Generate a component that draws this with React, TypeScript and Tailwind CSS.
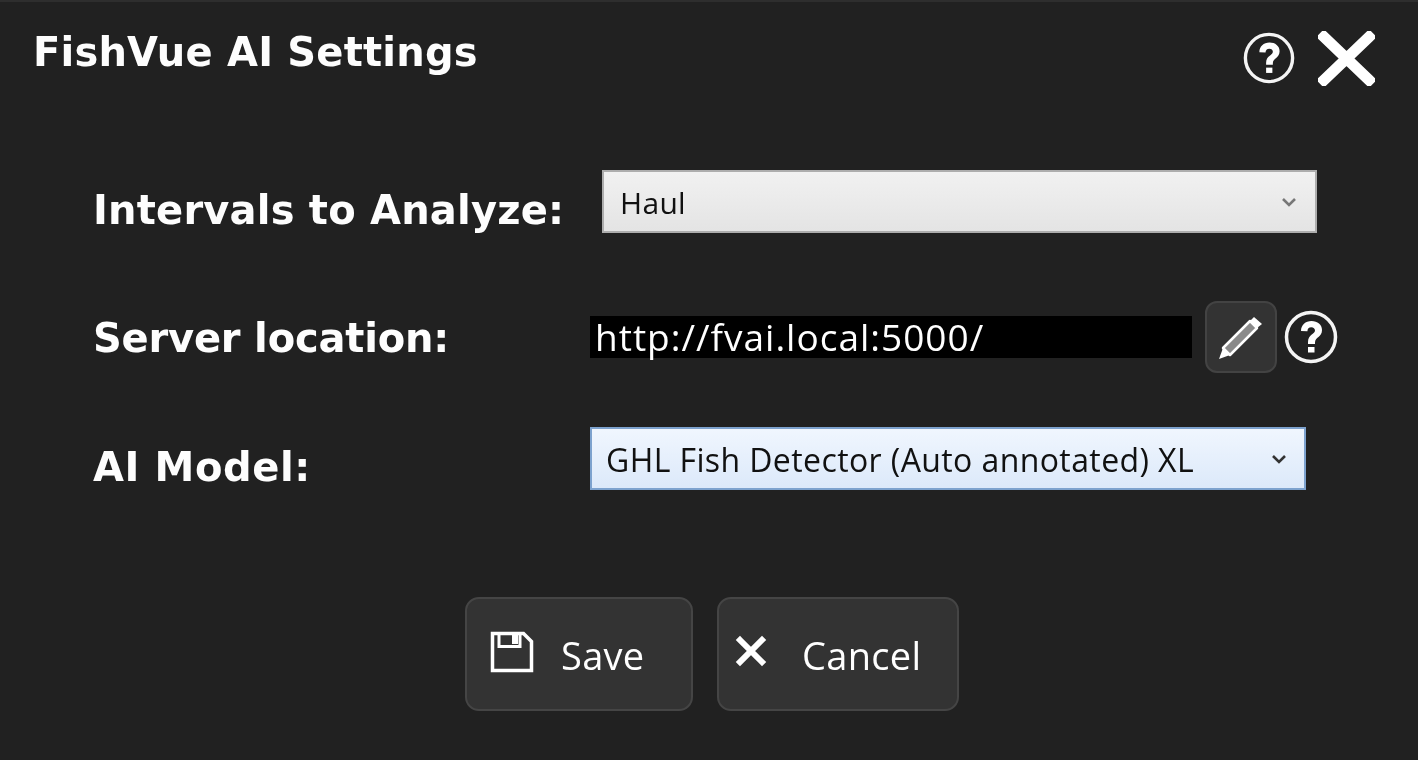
import React from 'react';

const labelFont = "font-['DejaVu_Sans',sans-serif] font-bold text-[#fdfdfd] text-[40px]";
const bodyFont = "font-['Open_Sans',sans-serif]";

const HelpIcon = () => (
  <svg viewBox="0 0 54 54" className="w-[54px] h-[54px]">
    <circle cx="27" cy="27" r="24.5" fill="none" stroke="#f4f4f4" strokeWidth="3.5" />
    <path d="M17 21c0-6 4.500-10 10.500-10 6 0 10.500 3.600 10.500 9 0 7.300-7 7-7 12.500v1.500h-7v-2c0-7.500 7-7.700 7-11.500 0-1.900-1.500-3.200-3.700-3.200-2.500 0-3.800 1.600-3.900 4z" fill="#fff" />
    <rect x="24" y="37" width="6.500" height="5.500" fill="#fff" />
  </svg>
);

const Chevron = ({ color }: { color: string }) => (
  <svg viewBox="0 0 16 10" className="w-4 h-2.5">
    <path d="M2 2l6 6 6-6" fill="none" stroke={color} strokeWidth="2.600" />
  </svg>
);

const SaveIcon = () => (
  <svg viewBox="0 0 44 44" className="w-11 h-11 -ml-[1px] -mt-[4px]">
    <path d="M2.500 3.500h31l8 8v29h-39z" fill="none" stroke="#ffffff" strokeWidth="3.500" />
    <path d="M9 3.500h21v13h-21z" fill="none" stroke="#ffffff" strokeWidth="3" />
    <rect x="22" y="5" width="6" height="9" fill="#ffffff" />
  </svg>
);

const PencilIcon = () => (
  <svg viewBox="0 0 46 46" className="w-[46px] h-[46px]">
    <path d="M5 34L32 7l7 7-27 27z" fill="#8a8a8a" stroke="#ffffff" strokeWidth="2.500" strokeLinejoin="round" />
    <path d="M32 7l4-4 8 7-5 4z" fill="#ffffff" />
    <path d="M5 34l7 7-11 4z" fill="#ffffff" />
  </svg>
);

const ActionButton = ({ icon, label, width, gap }: { icon: React.ReactNode; label: string; width: string; gap: string }) => (
  <button className={`${width} ${gap} h-[114px] flex items-center pl-[24px] rounded-[14px] border-2 border-[#454545] bg-[#333333] text-[#ffffff] text-[38px] tracking-[0.3px] ${bodyFont}`}>
    {icon}
    <span className="pt-[3px]">{label}</span>
  </button>
);

export default function App() {
  return (
    <div className="w-[1418px] h-[760px] overflow-hidden bg-[#212121]">
      <div className="h-full border-t-2 border-t-[#2e2e2e] blur-[0.6px]">
        <div className="flex justify-between h-[88px] pl-[33px] pr-[43px]">
          <h1 className={`${labelFont} tracking-[0.2px] leading-[48px] mt-[26px]`}>FishVue AI Settings</h1>
          <div className="flex items-center gap-[23px] mt-[28px] h-[56px]">
            <div className="w-[52px] h-[52px] flex items-center justify-center"><HelpIcon /></div>
            <svg viewBox="0 0 57 55" className="w-[57px] h-[55px]">
              <path d="M6 6l45 43M51 6L6 49" stroke="#fff" strokeWidth="11" strokeLinecap="square" />
            </svg>
          </div>
        </div>

        <div className="mt-[80px] pl-[93px] flex flex-col">
          <div className="flex items-center h-[63px]">
            <div className={`${labelFont} tracking-[0.2px] w-[509px] pt-[16px]`}>Intervals to Analyze:</div>
            <div className={`${bodyFont} w-[715px] h-[63px] flex items-center justify-between pl-[16px] pr-[18px] border-2 border-[#adadad] bg-gradient-to-b from-[#f1f1f1] to-[#e4e4e4] text-[#111111] text-[30px] tracking-[0.3px]`}>
              <span className="pt-[2px]">Haul</span>
              <Chevron color="#777777" />
            </div>
          </div>

          <div className="flex items-center h-[72px] mt-[68px]">
            <div className={`${labelFont} tracking-[-0.2px] w-[497px] pt-[2px]`}>Server location:</div>
            <div className={`${bodyFont} w-[602px] h-[42px] flex items-center pl-[5px] bg-black text-white text-[37px] tracking-[1px]`}>http://fvai.local:5000/</div>
            <button className="w-[72px] h-[72px] ml-[13px] flex items-center justify-center rounded-[12px] border-2 border-[#434343] bg-[#333333]"><PencilIcon /></button>
            <div className="ml-[7px]"><HelpIcon /></div>
          </div>

          <div className="flex items-center h-[63px] mt-[54px]">
            <div className={`${labelFont} tracking-[0.6px] w-[497px] pt-[16px]`}>AI Model:</div>
            <div className={`${bodyFont} w-[716px] h-[63px] flex items-center justify-between pl-[14px] pr-[17px] border-2 border-[#7da2ce] bg-gradient-to-b from-[#f0f6fe] to-[#dce9fa] text-[#111111] text-[32px] tracking-[0.4px]`}>
              <span className="pt-[3px]">GHL Fish Detector (Auto annotated) XL</span>
              <Chevron color="#333333" />
            </div>
          </div>
        </div>

        <div className="mt-[107px] pl-[465px] flex gap-[24px]">
          <ActionButton icon={<SaveIcon />} label="Save" width="w-[228px]" gap="gap-[27px]" />
          <ActionButton icon={<svg viewBox="0 0 32 32" className="w-8 h-8 -ml-[8px] -mt-[6px]"><path d="M5 5l22 22M27 5L5 27" stroke="#fff" strokeWidth="6" strokeLinecap="square" /></svg>} label="Cancel" width="w-[242px]" gap="gap-[35px]" />
        </div>
      </div>
    </div>
  );
}
